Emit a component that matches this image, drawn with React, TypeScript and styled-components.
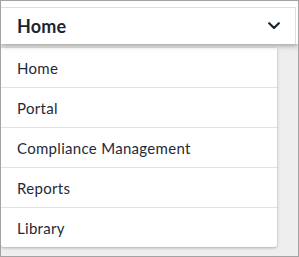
import React from "react";
import styled, { createGlobalStyle } from "styled-components";

const Global = createGlobalStyle`
  html, body { margin: 0; padding: 0; background: #ffffff; }
  * { box-sizing: border-box; }
`;

const Frame = styled.div`
  width: 299px;
  height: 257px;
  border: 1px solid #a3a3a3;
  background: #eeeeee;
  font-family: Lato, "Noto Sans", sans-serif;
  color: #1b2633;
  display: flex;
  flex-direction: column;
  overflow: hidden;
`;

const TopArea = styled.div`
  background: #ffffff;
  padding: 6px 2px 0 0;
  box-shadow: 0 2px 5px rgba(0, 0, 0, 0.32);
  position: relative;
  z-index: 1;
`;

const Header = styled.div`
  height: 37px;
  border-top: 1px solid #dedede;
  border-right: 1px solid #dedede;
  display: flex;
  align-items: center;
  justify-content: space-between;
  padding: 0 15px 0 16px;
`;

const Title = styled.span`
  font-size: 18px;
  font-weight: 700;
  letter-spacing: 0.2px;
`;

const List = styled.ul`
  list-style: none;
  margin: 4px 0 0 0;
  padding: 0;
  width: 276px;
  background: #ffffff;
  border-radius: 0 0 3px 3px;
  box-shadow: 0 1px 3px rgba(0, 0, 0, 0.28);
`;

const Item = styled.li`
  height: 40px;
  display: flex;
  align-items: center;
  padding-left: 16px;
  font-size: 15px;
  letter-spacing: 0.3px;
  color: #1f2a38;
  & + & {
    border-top: 1px solid #e2e2e2;
  }
  &:first-child {
    height: 39px;
  }
`;

const Chevron = () => (
  <svg width="12" height="8" viewBox="0 0 12 8" fill="none">
    <polyline
      points="1.2,1.2 6,6 10.8,1.2"
      stroke="#1b2633"
      strokeWidth="2.2"
      strokeLinecap="round"
      strokeLinejoin="round"
    />
  </svg>
);

const items = ["Home", "Portal", "Compliance Management", "Reports", "Library"];

export default function App() {
  return (
    <>
      <Global />
      <Frame>
        <TopArea>
          <Header>
            <Title>Home</Title>
            <Chevron />
          </Header>
        </TopArea>
        <List>
          {items.map((t) => (
            <Item key={t}>{t}</Item>
          ))}
        </List>
      </Frame>
    </>
  );
}
